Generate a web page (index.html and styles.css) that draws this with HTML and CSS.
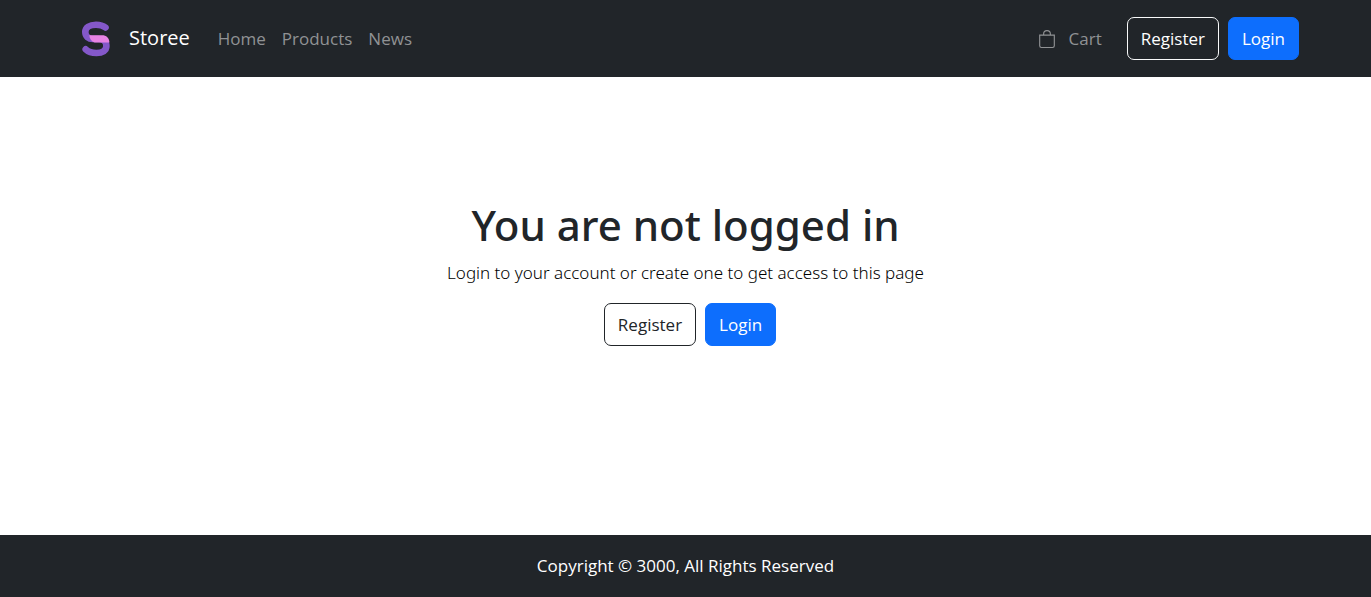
FILE: index.html
```html
<!DOCTYPE html>
<html lang="en">
<head>
<meta charset="utf-8">
<meta name="viewport" content="width=device-width, initial-scale=1">
<title>Storee</title>
<link rel="stylesheet" href="styles.css">
</head>
<body>
<header class="navbar">
  <div class="container">
    <a class="brand" href="#">
      <svg class="logo" viewBox="0 0 48 42" aria-hidden="true">
        <path d="M33.500 9.500C31 7.500 28 6.700 24 6.700C17.500 6.700 13.300 9.500 13.300 14C13.300 18.500 16.500 21 21 21H27C31.500 21 34.400 23.500 34.400 28C34.400 32.500 30.500 35 24.500 35C20 35 16.500 34 13.700 31.300" fill="none" stroke="#8458c9" stroke-width="6.600" stroke-linecap="round"/>
        <path d="M17.300 17.300H30C34.500 17.300 37.200 20 37.400 24.500H22.500C19.500 23.500 17.500 21 17.300 17.300Z" fill="#e783e3"/>
      </svg>
      <span class="brand-name">Storee</span>
    </a>
    <nav class="links">
      <a class="nav-link" href="#">Home</a>
      <a class="nav-link" href="#">Products</a>
      <a class="nav-link" href="#">News</a>
    </nav>
    <div class="actions">
      <a class="nav-link cart" href="#">
        <svg class="bag" viewBox="0 0 16 16" fill="currentColor" aria-hidden="true"><path d="M8 1a2.500 2.500 0 0 1 2.500 2.500V4h-5v-.5A2.500 2.500 0 0 1 8 1zm3.500 3v-.5a3.500 3.500 0 1 0-7 0V4H1v10a2 2 0 0 0 2 2h10a2 2 0 0 0 2-2V4h-3.500zM2 5h12v9a1 1 0 0 1-1 1H3a1 1 0 0 1-1-1V5z"/></svg>
        <span>Cart</span>
      </a>
      <button class="btn btn-outline-light" type="button">Register</button>
      <button class="btn btn-primary" type="button">Login</button>
    </div>
  </div>
</header>
<main class="notice">
  <h1 class="title">You are not logged in</h1>
  <p class="lead">Login to your account or create one to get access to this page</p>
  <div class="choices">
    <button class="btn btn-outline-dark" type="button">Register</button>
    <button class="btn btn-primary" type="button">Login</button>
  </div>
</main>
<footer class="footer">Copyright © 3000, All Rights Reserved</footer>
</body>
</html>
```

FILE: styles.css
```css
* { box-sizing: border-box; }

body {
  margin: 0;
  min-height: 100vh;
  display: flex;
  flex-direction: column;
  background: #fff;
  color: #212529;
  font: 400 17px/26px "Open Sans", "Noto Sans", sans-serif;
}

.navbar,
.footer { background: #212529; color: #fff; }

.navbar { padding: 17px 0; }

.container {
  display: flex;
  align-items: center;
  max-width: 1253px;
  margin: 0 auto;
  padding: 0 13px;
}

.brand {
  display: flex;
  align-items: center;
  gap: 9px;
  margin-right: 20px;
  color: #fff;
  font-size: 20px;
  text-decoration: none;
}

.brand-name { padding-bottom: 2px; }

.logo { width: 48px; height: 42px; }

.links { display: flex; }

.nav-link {
  padding: 8px;
  color: #909294;
  text-decoration: none;
}

.actions {
  display: flex;
  align-items: center;
  gap: 9px;
  margin-left: auto;
}

.cart {
  display: flex;
  align-items: center;
  gap: 13px;
  margin-right: 8px;
}

.bag { width: 18px; height: 18px; }

.btn {
  padding: 8px 13px;
  border: 1px solid transparent;
  border-radius: 7px;
  background: none;
  color: #fff;
  font: inherit;
  line-height: 25px;
  cursor: pointer;
}

.btn-primary { background: #0d6efd; border-color: #0d6efd; }
.btn-outline-light { border-color: #f8f9fa; }
.btn-outline-dark { border-color: #212529; color: #212529; }

.notice {
  flex: 1;
  display: flex;
  flex-direction: column;
  align-items: center;
  justify-content: center;
  padding: 36px 16px 104px;
  text-align: center;
}

.title {
  margin: 0 0 9px;
  font-family: "Noto Sans", "Open Sans", sans-serif;
  font-size: 42px;
  font-weight: 500;
  line-height: 53px;
}

.lead {
  margin: 0 0 17px;
  color: #000;
  font-family: "Noto Sans", "Open Sans", sans-serif;
  font-weight: 300;
}

.choices {
  display: flex;
  gap: 9px;
  margin-left: 9px;
}

.footer { padding: 18px; text-align: center; }
```
